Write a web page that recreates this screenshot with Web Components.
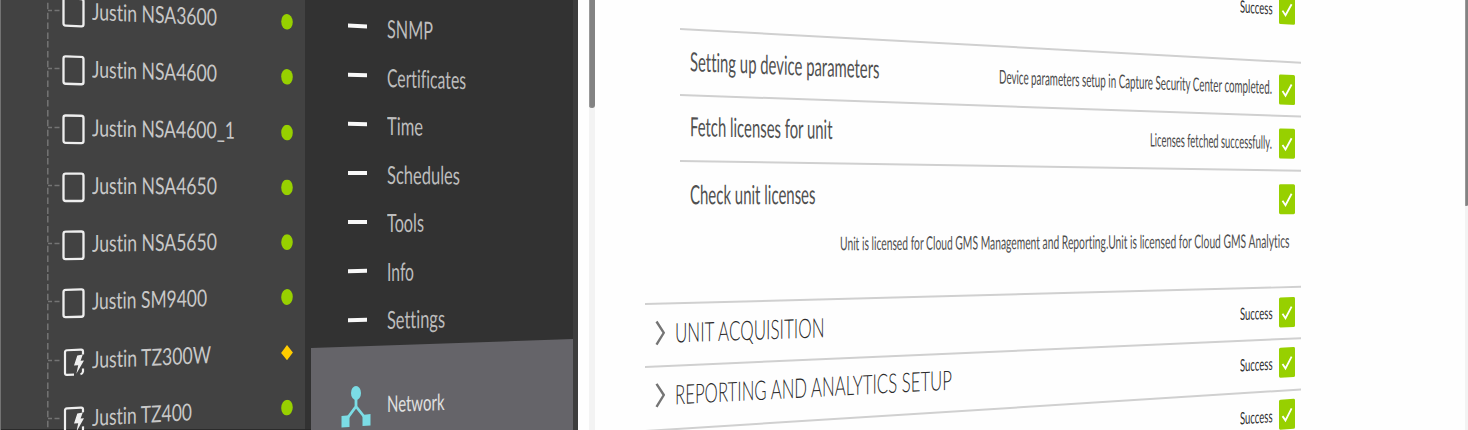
<!DOCTYPE html>
<html lang="en">
<head>
<meta charset="utf-8">
<title>Device management</title>
<style>
html, body { margin: 0; height: 430px; overflow: hidden; background: #fff; }
body { font-family: Lato, "Open Sans", sans-serif; font-variant-ligatures: none; }
</style>
</head>
<body>
<app-shell>
  <device-tree slot="tree">
    <device-row w="125" slope=".0460">Justin NSA3600</device-row>
    <device-row w="125" slope=".0318">Justin NSA4600</device-row>
    <device-row w="143" slope=".0168">Justin NSA4600_1</device-row>
    <device-row w="125" slope=".0019">Justin NSA4650</device-row>
    <device-row w="125" slope="-.0131">Justin NSA5650</device-row>
    <device-row w="115" slope="-.0280">Justin SM9400</device-row>
    <device-row w="119" slope="-.0430" kind="bolt" status="warn">Justin TZ300W</device-row>
    <device-row w="100" slope="-.0579" kind="bolt">Justin TZ400</device-row>
  </device-tree>
  <side-menu slot="menu">
    <menu-row w="46" slope=".041" dy="2.5">SNMP</menu-row>
    <menu-row w="79" slope=".029" dy="2.4">Certificates</menu-row>
    <menu-row w="36" slope=".017" dy="1.8">Time</menu-row>
    <menu-row w="73" slope=".006" dy="1.4">Schedules</menu-row>
    <menu-row w="37" slope="-.005" dy=".9">Tools</menu-row>
    <menu-row w="27" slope="-.016" dy=".3">Info</menu-row>
    <menu-row w="58" slope="-.027" dy="-.3">Settings</menu-row>
    <menu-active slot="active">Network</menu-active>
  </side-menu>
  <status-list slot="content">
    <status-row indent="35" h="67" line="0" slope=".061" c="12" end="Success" ew="32.5" es="17" ey="0" dark></status-row>
    <status-row indent="35" h="66.3" line=".0543" slope=".0482" c="32.6" w="189.5" label="Setting up device parameters" end="Device parameters setup in Capture Security Center completed." ew="273" es="19" ey="-.8"></status-row>
    <status-row indent="35" h="66" line=".0347" slope="0.0295" c="32" w="142.5" label="Fetch licenses for unit" end="Licenses fetched successfully." ew="122" es="18.5" ey="-.7"></status-row>
    <status-row indent="35" h="143" line=".0158" slope=".0087" c="33.4" w="125.5" label="Check unit licenses" note="Unit is licensed for Cloud GMS Management and Reporting.Unit is licensed for Cloud GMS Analytics" nw="449.5"></status-row>
    <status-row h="63" line="-.0262" slope="-.034" c="29.3" w="149.5" label="UNIT ACQUISITION" head end="Success" ew="32.5" es="17" ey=".3" dark></status-row>
    <status-row h="63.7" line="-.0439" slope="-.0534" c="29" w="277" label="REPORTING AND ANALYTICS SETUP" head end="Success" ew="32.5" es="17" ey=".6" dark></status-row>
    <status-row h="63" line="-.0632" slope="-.0665" c="25" end="Success" ew="32.5" es="17" ey="1" dark></status-row>
  </status-list>
</app-shell>
<script>
function define(name, render, ready) {
  customElements.define(name, class extends HTMLElement {
    connectedCallback() {
      if (this.shadowRoot) return;
      const root = this.attachShadow({ mode: 'open' });
      root.innerHTML = render(this);
      if (ready) ready(this, root);
    }
  });
}
const attr = (el, name, fallback) => el.getAttribute(name) ?? fallback;

/* Text condensed to a given width. */
define('fit-text', el => `
<style>
:host { display: block; flex: none; width: ${attr(el, 'w', 100)}px; white-space: nowrap; line-height: 1.2; }
span { display: inline-block; transform-origin: 0 50%; }
</style><span><slot></slot></span>`, (el, root) => {
  const span = root.querySelector('span');
  const natural = span.getBoundingClientRect().width;
  if (natural) span.style.transform = `scaleX(${attr(el, 'w', 100) / natural})`;
});

define('v-scroll', el => `
<style>
:host { display: block; background: #f3f3f3; height: 430px; overflow: hidden; }
div { background: #838383; box-shadow: inset 1px 0 #999; height: ${attr(el, 'thumb', 100)}px; border-radius: 0 0 4px 4px; }
</style><div></div>`);

define('app-shell', () => `
<style>
:host { display: grid; grid-template-columns: 305px 273px 11px 6px 1fr 3px; width: 1468px; height: 430px; overflow: hidden; background: #fefefe; }
::slotted(*) { min-width: 0; }
</style>
<slot name="tree"></slot><slot name="menu"></slot><i></i><v-scroll thumb="108"></v-scroll><slot name="content"></slot><v-scroll thumb="206"></v-scroll>`);

define('device-tree', () => `
<style>
:host { display: block; box-sizing: border-box; height: 430px; overflow: hidden; background: #424242; border-left: 1px solid #737373; box-shadow: inset 0 -1px #2b2b2b; }
div { margin-top: -17.1px; }
</style><div><slot></slot></div>`);

define('device-row', el => `
<style>
:host { display: flex; align-items: center; height: 58.3px; padding-left: 46px; color: #c8c8c8; font-size: 23.4px; }
.tree { flex: none; width: 15px; height: 58.3px; }
.row { display: flex; align-items: center; flex: 1; height: 58.3px; transform: skewY(${Math.atan(+attr(el, 'slope', 0))}rad); transform-origin: 11px 50%; }
.box { width: 23px; height: 31px; flex: none; }
fit-text { margin-left: 7px; transform: translateY(-2px); }
.dot { margin-left: auto; margin-right: 11.6px; width: 12px; height: 16px; flex: none; }
</style>
<svg class="tree" viewBox="0 0 15 58.3"><path d="M.8 0V58.3" stroke="#747474" stroke-width="1.5" stroke-dasharray="6.5 3.4"/><path d="M1 27.6H5M7.5 27.6H12.5" stroke="#747474" stroke-width="1.5"/></svg>
<div class="row">
${attr(el, 'kind') ? `<svg class="box" viewBox="0 0 23 31"><path d="M12 27.6H5Q3 27.6 3 25.6V5Q3 3 5 3H19Q21 3 21 5V8M21 22V25Q20.6 27 18.5 27.6" fill="none" stroke="#eee" stroke-width="2.2"/><path d="M15.3 8.8L20.8 8L18.6 14H22L14.4 27L16.2 18.5H12Z" fill="#eee"/></svg>`
: `<svg class="box" viewBox="0 0 23 31"><rect x="1.5" y="1.6" width="20" height="27.4" rx="2.2" fill="none" stroke="#eee" stroke-width="2.3"/></svg>`}
<fit-text w="${attr(el, 'w')}"><slot></slot></fit-text>
<svg class="dot" viewBox="0 0 12 16">${attr(el, 'status') ? '<path d="M6 .2L11.9 8L6 15.4L.1 8Z" fill="#ffcc00"/>' : '<ellipse cx="6" cy="8" rx="5.8" ry="7.9" fill="#97d000"/>'}</svg>
</div>`);

define('side-menu', () => `
<style>
:host { display: flex; flex-direction: column; box-sizing: border-box; height: 430px; overflow: hidden; background: #323232; border-right: 5px solid #3d3d3d; box-shadow: inset 0 -1px #292929; }
.items { flex: none; height: 338px; padding-top: 1px; box-sizing: border-box; }
</style><div class="items"><slot></slot></div><slot name="active"></slot>`);

define('menu-row', el => `
<style>
:host { display: flex; align-items: center; height: 49px; padding-left: 42.5px; color: #bdbdbd; font-size: 25px; font-weight: 400; }
i, fit-text { transform: skewY(${Math.atan(+attr(el, 'slope', 0))}rad); }
i { width: 18.5px; height: 4px; background: #f8f8f8; }
fit-text { margin-left: 20.7px; margin-top: ${2 * attr(el, 'dy', 0)}px; transform-origin: 0 50%; }
</style><i></i><fit-text w="${attr(el, 'w')}"><slot></slot></fit-text>`);

define('menu-active', () => `
<style>
:host { display: flex; flex: none; box-sizing: border-box; align-items: flex-start; height: 92px; margin-left: 6px; padding: 46px 0 0 29px; background: #656469; clip-path: polygon(0 10px, 100% 1px, 100% 100%, 0 100%); color: #e0e0e0; font-size: 22.5px; }
svg { flex: none; width: 32px; height: 44px; }
fit-text { margin: 5.6px 0 0 15px; transform: skewY(-1.9deg); transform-origin: 0 50%; }
</style>
<svg viewBox="0 0 32 44"><g fill="#7bdce5"><ellipse cx="16" cy="9" rx="5" ry="7"/><path d="M1.5 32L9.5 31.3V43L1.5 43.6ZM22.5 31L30.5 30V41.5L22.5 42Z"/></g><path d="M16 13V23M6 36L16 22.5L26 35" fill="none" stroke="#7bdce5" stroke-width="2.8"/></svg>
<fit-text w="57.5"><slot></slot></fit-text>`);

define('check-badge', () => `
<style>:host { display: block; flex: none; width: 16px; height: 30.4px; background: #97d000; border-radius: 1.5px; } svg { display: block; width: 16px; height: 30.4px; }</style>
<svg viewBox="0 0 16 30.4"><path d="M3.5 16.5L6.5 21L12.6 9.5" fill="none" stroke="#fff" stroke-width="1.8"/></svg>`);

define('status-list', () => `
<style>
:host { display: block; box-sizing: border-box; height: 430px; overflow: hidden; padding-left: 50px; background: #fefefe; }
div { margin-top: -39px; width: 656px; }
</style><div><slot></slot></div>`);

/* One table row: a slanted rule on top, then the label and its result on a slanted line. */
define('status-row', el => {
  const a = (n, f) => attr(el, n, f);
  const c = +a('c', 30), first = +a('line') === 0;
  return `
<style>
:host { display: block; height: ${a('h')}px; margin-left: ${a('indent', 0)}px; color: #505050; }
.line { height: 1.6px; margin-bottom: -1.6px; background: ${first ? 'none' : '#d0d0d0'}; transform: skewY(${Math.atan(+a('line'))}rad); transform-origin: 0 0; }
.row { display: flex; align-items: center; height: 40px; margin-top: ${c - 20}px; padding-right: 6px; transform: skewY(${Math.atan(+a('slope'))}rad); transform-origin: ${el.hasAttribute('indent') ? 10 : 30}px 50%; }
.wrap { display: flow-root; }
.label { margin-left: 9.5px; font-size: 26.5px; transform: translateY(1.2px) skewY(-.55deg); transform-origin: 0 50%; }
.head { margin-left: 9.5px; font-size: 27px; font-weight: 300; color: #2a2a2a; transform: translateY(-.6px); }
.chev { flex: none; width: 10px; height: 26px; margin-left: 10px; transform: translateY(-.6px); }
.end { margin-left: auto; margin-right: 6.8px; transform: translateY(${a('ey', 0)}px) skewY(${el.hasAttribute('dark') ? 0 : -.55}deg); font-size: ${a('es', 18)}px; color: ${el.hasAttribute('dark') ? '#303030' : '#4a4a4a'}; }
check-badge { ${a('end') ? '' : 'margin-left: auto;'} }
.note { margin: 17.5px 12px 0 auto; font-size: 18.8px; transform: skewY(-.32deg); }
</style>
<div class="line"></div>
<div class="wrap"><div class="row">
${el.hasAttribute('head') ? '<svg class="chev" viewBox="0 0 10 26"><path d="M1.5 1.5L8.8 13L1.5 24.5" fill="none" stroke="#757575" stroke-width="2.4"/></svg>' : ''}
${a('label') ? `<fit-text class="${el.hasAttribute('head') ? 'head' : 'label'}" w="${a('w')}">${a('label')}</fit-text>` : ''}
${a('end') ? `<fit-text class="end" w="${a('ew')}">${a('end')}</fit-text>` : ''}
<check-badge></check-badge>
</div>
${a('note') ? `<fit-text class="note" w="${a('nw')}">${a('note')}</fit-text>` : ''}
</div>`;
});
</script>
</body>
</html>
